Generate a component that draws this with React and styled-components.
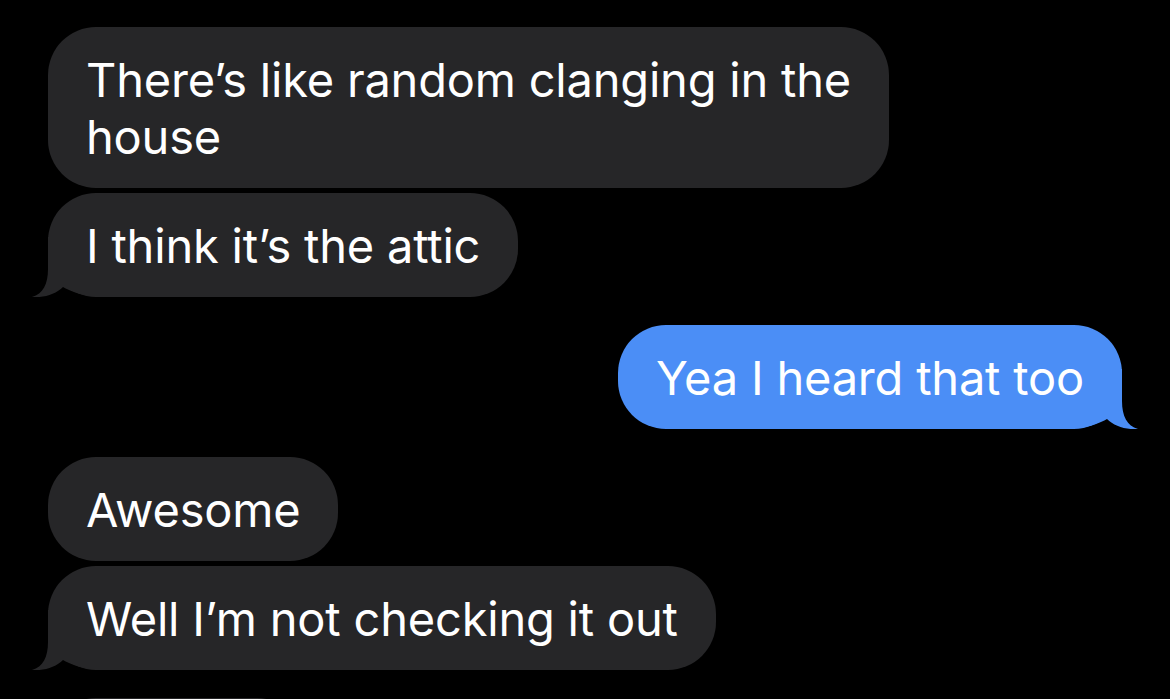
import styled, { createGlobalStyle } from 'styled-components';

const GlobalStyle = createGlobalStyle`
  html, body {
    margin: 0;
    padding: 0;
    background: #000;
    overflow: hidden;
  }
`

const gray = "#262628";
const blue = "#4b8ef6";

const messages = [
  { from: "them", text: "There\u2019s like random clanging in the\nhouse", tail: false },
  { from: "them", text: "I think it\u2019s the attic", tail: true },
  { from: "me", text: "Yea I heard that too", tail: true },
  { from: "them", text: "Awesome", tail: false },
  { from: "them", text: "Well I\u2019m not checking it out", tail: true },
  { from: "them", text: "Haha ok", tail: false },
];

function Tail({ mine }) {
  return (
    <TailSvg $mine={mine} viewBox="-18 -60 70 60" width="70" height="60">
      <path
        d="M0 -60 L0 -28 C0 -13 -5 -3 -16 0 C-4 1 8 -3 15 -10 C22 -6 30 -3 42 -1 L52 -1 L52 -60 Z"
        fill={mine ? blue : gray}
      />
    </TailSvg>
  );
}

function App() {
  return (
    <>
      <GlobalStyle />
      <Thread>
        {messages.map((m, i) => {
          const next = messages[i + 1];
          const grouped = next && next.from === m.from && !m.tail;
          return (
            <Row key={i} $mine={m.from === "me"} $gap={i === messages.length - 1 ? 0 : grouped ? 5 : 28}>
              <Bubble $mine={m.from === "me"}>
                {m.tail && <Tail mine={m.from === "me"} />}
                <Text>{m.text}</Text>
              </Bubble>
            </Row>
          );
        })}
      </Thread>
    </>
  );
}

const Thread = styled.main`
  display: flex;
  flex-direction: column;
  padding: 27px 48px 0 48px;
  font-family: Inter, "Noto Sans", sans-serif;
`

const Row = styled.div`
  display: flex;
  justify-content: ${(p) => (p.$mine ? "flex-end" : "flex-start")};
  margin-bottom: ${(p) => p.$gap}px;
`

const Bubble = styled.div`
  position: relative;
  padding: 24px 38px 23px 38px;
  border-radius: 48px;
  background: ${(p) => (p.$mine ? blue : gray)};
  color: #fff;
  font-size: 47px;
  line-height: 57px;
  letter-spacing: -0.2px;
  white-space: pre-line;
`

const Text = styled.span`
  position: relative;
  z-index: 1;
`

const TailSvg = styled.svg`
  position: absolute;
  bottom: 0;
  ${(p) => (p.$mine ? "right: -18px; transform: scaleX(-1);" : "left: -18px;")}
  pointer-events: none;
  z-index: 0;
`

export default App;
